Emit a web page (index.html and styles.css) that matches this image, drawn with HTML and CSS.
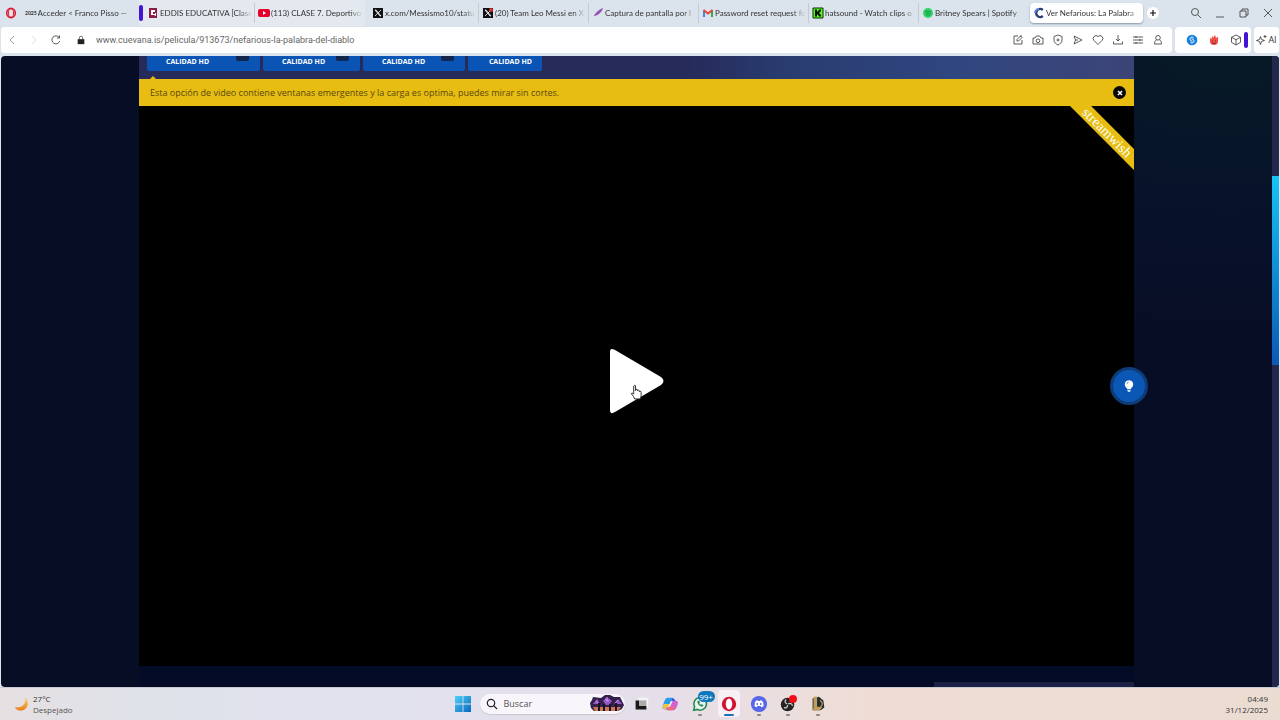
FILE: index.html
```
<!DOCTYPE html>
<html lang="es">
<head>
  <meta charset="UTF-8" />
  <title>Ver Nefarious: La Palabra del Diablo</title>
  <link rel="stylesheet" href="styles.css">
</head>
<body>
  <div class="tabbar">
    <button class="opera-menu" aria-label="Menú"><svg viewBox="0 0 12 12"><ellipse cx="6" cy="6" rx="4.3" ry="4.7" fill="none" stroke="#e0162f" stroke-width="1.6"/><ellipse cx="6" cy="6" rx="2.6" ry="4.2" fill="none" stroke="#e0162f" stroke-width="1"/></svg></button>
    <a class="tab tab-first" href="#"><span class="site-mark">2025</span><span class="tab-text">Acceder &lt; Franco Pisso —</span></a>
    <div class="tab-group">
      <span class="group-mark"></span>
      <a class="tab" href="#"><svg viewBox="0 0 12 12"><rect x="2" y="1" width="8" height="10" fill="#8c1d45"/><path d="M4 3h4v2H6v2h2V6h1v3L7 8H4z" fill="#fff"/></svg><span class="tab-text">EDDIS EDUCATIVA [Clase</span></a>
      <a class="tab" href="#"><svg viewBox="0 0 12 12"><rect x="0" y="2" width="12" height="8" rx="2" fill="#e4002b"/><path d="M5 4l3 2-3 2z" fill="#fff"/></svg><span class="tab-text">(113) CLASE 7. Deportivo</span></a>
    </div>
    <a class="tab" href="#"><svg viewBox="0 0 12 12"><path d="M1 1h10v10H1z" fill="#111"/><path d="M3 3l5 6h1L4 3zM9 3L3 9" fill="#777" stroke="#fff" stroke-width=".8"/></svg><span class="tab-text">x.com/Messismo10/statu</span></a>
    <a class="tab" href="#"><svg viewBox="0 0 12 12"><path d="M1 1h10v10H1z" fill="#111"/><path d="M3 3l5 6h1L4 3zM9 3L3 9" fill="#777" stroke="#fff" stroke-width=".8"/><circle cx="9" cy="3" r="2" fill="#d33434"/></svg><span class="tab-text">(20) Team Leo Messi en X</span></a>
    <a class="tab" href="#"><svg viewBox="0 0 12 12"><path d="M1 11C3 6 6 3 11 1 10 5 6 9 2 9z" fill="#9456b3"/></svg><span class="tab-text">Captura de pantalla por l</span></a>
    <a class="tab" href="#"><svg viewBox="0 0 12 12"><path d="M2 10V3" stroke="#4285f4" stroke-width="2"/><path d="M10 10V3" stroke="#34a853" stroke-width="2"/><path d="M1.500 3L6 6.500 10.500 3" fill="none" stroke="#ea4335" stroke-width="2"/></svg><span class="tab-text">Password reset request fo</span></a>
    <a class="tab" href="#"><svg viewBox="0 0 12 12"><path d="M1 1h10v10H1z" fill="#53fc18" stroke="#102908"/><path d="M3 2.500h2v2h1v-1h1v-1h2v2H8v1H7v1h1v1h1v2H7v-1H6v-1H5v2H3z" fill="#071004"/></svg><span class="tab-text">hatsound - Watch clips o</span></a>
    <a class="tab" href="#"><svg viewBox="0 0 12 12"><circle cx="6" cy="6" r="5" fill="#2fd566"/><path d="M3 4.500q3-1 6 .5M3.500 6.300q3-.8 5 .4M4 8q2-.5 4 .3" fill="none" stroke="#168343" stroke-width=".8"/></svg><span class="tab-text">Britney Spears | Spotify</span></a>
    <a class="tab active" href="#"><svg viewBox="0 0 12 12"><path d="M9.800 3A4 4 0 1 0 9.800 9" fill="none" stroke="#2b3f75" stroke-width="2.400"/><path d="M2 6a4 4 0 0 1 4-4" fill="none" stroke="#5a87e0" stroke-width="2"/></svg><span class="tab-text">Ver Nefarious: La Palabra</span></a>
    <button class="new-tab" aria-label="Nueva pestaña"><svg viewBox="0 0 12 12"><path d="M6 3v6M3 6h6" stroke="#111" stroke-width="1.200"/></svg></button>
    <div class="window-buttons">
      <button aria-label="Buscar pestañas"><svg viewBox="0 0 12 12"><circle cx="5" cy="5" r="3.500"/><path d="M7.600 7.600L11 11"/></svg></button>
      <button aria-label="Minimizar"><svg viewBox="0 0 12 12"><path d="M2 10h8"/></svg></button>
      <button aria-label="Restaurar"><svg viewBox="0 0 12 12"><path d="M2 4h6v6H2zM4 4V2h6v6H8"/></svg></button>
      <button aria-label="Cerrar"><svg viewBox="0 0 12 12"><path d="M2 2l8 8M10 2l-8 8"/></svg></button>
    </div>
  </div>

  <div class="toolbar">
    <div class="address">
      <button class="nav off" aria-label="Atrás"><svg viewBox="0 0 12 12"><path d="M8 2L4 6l4 4"/></svg></button>
      <button class="nav faint" aria-label="Adelante"><svg viewBox="0 0 12 12"><path d="M4 2l4 4-4 4"/></svg></button>
      <button class="nav" aria-label="Recargar"><svg viewBox="0 0 12 12"><path d="M9.700 7.200A4 4 0 1 1 9 3.300M9.500 1.500v2.500H7"/></svg></button>
      <svg class="lock" viewBox="0 0 12 12"><path d="M2 5h8v6H2z" fill="#222" stroke="none"/><path d="M4 5V3.500a2 2 0 0 1 4 0V5"/></svg>
      <div class="url"><label for="url">Dirección</label><input id="url" type="text" value="www.cuevana.is/pelicula/913673/nefarious-la-palabra-del-diablo"></div>
      <div class="page-tools">
        <button aria-label="Editar"><svg viewBox="0 0 12 12"><path d="M6 2H2v8h8V6M5 7V5.500L8.500 2 10 3.500 6.500 7zM8 2h2"/></svg></button>
        <button aria-label="Captura"><svg viewBox="0 0 12 12"><path d="M1 4h2l1.500-2h3L9 4h2v6H1z"/><circle cx="6" cy="6.800" r="1.800"/></svg></button>
        <button aria-label="Bloqueador"><svg viewBox="0 0 12 12"><path d="M6 1l4 1.500V6c0 2.500-2 4-4 5-2-1-4-2.500-4-5V2.500zM6 4.500v3M4.500 6h3"/></svg></button>
        <button aria-label="Enviar"><svg viewBox="0 0 12 12"><path d="M2 2l8 4-8 4 1.500-4zM3.500 6H6"/></svg></button>
        <button aria-label="Favorito"><svg viewBox="0 0 12 12"><path d="M6 10.500L2 6.500a2.700 2.700 0 0 1 4-4 2.700 2.700 0 0 1 4 4z"/></svg></button>
        <button aria-label="Descargas"><svg viewBox="0 0 12 12"><path d="M6 1v6M4 5l2 2 2-2M1.500 7.500V10h9V7.500"/></svg></button>
        <button aria-label="Ajustes"><svg viewBox="0 0 12 12"><path d="M1 3h10M1 6h10M1 9h10M4 2v2M8 5v2M4 8v2"/></svg></button>
        <button aria-label="Perfil"><svg viewBox="0 0 12 12"><circle cx="6" cy="3.800" r="2.300"/><path d="M4.500 6C3 6.500 2.500 8 2.500 10h7c0-2-.5-3.500-2-4"/></svg></button>
      </div>
    </div>
    <div class="extensions">
      <button aria-label="Shazam"><svg viewBox="0 0 12 12"><circle cx="6" cy="6" r="5.300" fill="#147ee0" stroke="none"/><path d="M7.500 3.500C5 1.800 2.500 5 5 6.800l1.500.5M4.500 8.500C7 10.200 9.500 7 7 5.200l-1.500-.5" stroke="#fff" stroke-width="1"/></svg></button>
      <button aria-label="Fuego"><svg viewBox="0 0 12 12"><path d="M2 4l1.500 1L4 2l1.500 1.500L7 .7 8 4l2-1.200V8c0 4-8 4-8 0z" fill="#ef5146" stroke="none"/><path d="M4 7h1M7 7h1M4 9q2 1 4 0" stroke="#721d27"/></svg></button>
      <button aria-label="Extensiones"><svg viewBox="0 0 12 12"><path d="M6 1l4.500 2.300v5L6 11 1.500 8.300v-5zM1.500 3.300L6 5.700l4.500-2.400M6 5.700V11"/></svg></button>
      <span class="group-mark"></span>
    </div>
    <button class="ai"><svg viewBox="0 0 12 12"><path d="M4.500 2.500l1 3 3 1-3 1-1 3-1-3-3-1 3-1zM9 1v3M7.500 2.500h3"/></svg>AI</button>
  </div>

  <div class="page">
    <main class="movie">
      <div class="servers">
        <button class="server">CALIDAD HD<span class="views"></span></button>
        <button class="server">CALIDAD HD<span class="views"></span></button>
        <button class="server">CALIDAD HD<span class="views"></span></button>
        <button class="server">CALIDAD HD</button>
      </div>
      <div class="notice">
        <span>Esta opción de video contiene ventanas emergentes y la carga es optima, puedes mirar sin cortes.</span>
        <button class="close" aria-label="Cerrar aviso"><svg viewBox="0 0 12 12"><path d="M4 4l4 4M8 4l-4 4" stroke="#fff" stroke-width="1.500"/></svg></button>
      </div>
      <div class="player">
        <button class="play" aria-label="Reproducir">
          <svg viewBox="0 0 54 66"><path d="M0 4Q0-1 5 2L51 29q5 4 0 8L5 64q-5 3-5-2z" fill="#fff"/></svg>
          <svg class="cursor" viewBox="0 0 14 17"><path d="M4 9V2q1-2 2 0v5-1q2-1 2 0v1q2-1 2 0v1q2-1 2 1v3q0 2-1 4H5Q4 13 1.500 10.500q0-2 2.500 0z" fill="#fff" stroke="#222"/></svg>
        </button>
        <div class="ribbon"><span>streamwish</span></div>
      </div>
      <div class="below"><div class="below-bar"></div></div>
    </main>
    <div class="scrollbar"><div class="thumb"></div></div>
    <button class="lights" aria-label="Apagar luces"><svg viewBox="0 0 12 16"><path d="M6 1a5 5 0 0 0-3 9l1 2h4l1-2a5 5 0 0 0-3-9zM4 13h4v1l-1 1H5l-1-1z" fill="#fff"/><path d="M3.500 5.500q.3-2 2-2.300" fill="none" stroke="#1459b5" stroke-width=".8"/></svg></button>
  </div>

  <div class="taskbar">
    <div class="weather">
      <svg viewBox="0 0 16 16"><defs><linearGradient id="moon" x2="0" y2="1"><stop stop-color="#fbd562"/><stop offset="1" stop-color="#ea7d18"/></linearGradient></defs><path d="M12 1c5 5 3 13-4 14-4 .5-6-1-7-4 5 2 12-1 11-10z" fill="url(#moon)"/></svg>
      <div><div>27°C</div><div class="sky">Despejado</div></div>
    </div>
    <div class="dock">
      <button class="start" aria-label="Inicio"><svg viewBox="0 0 16 16"><defs><linearGradient id="win" x2="1" y2="1"><stop stop-color="#4fd0f7"/><stop offset="1" stop-color="#0867bf"/></linearGradient></defs><path d="M0 0h7.600v7.600H0zM8.400 0H16v7.600H8.400zM0 8.400h7.600V16H0zM8.400 8.400H16V16H8.400z" fill="url(#win)"/></svg></button>
      <div class="search">
        <svg viewBox="0 0 12 12"><circle cx="5" cy="5" r="3.700" fill="none" stroke="#222" stroke-width="1.200"/><path d="M7.700 7.700L11 11" stroke="#222" stroke-width="1.200"/></svg>
        <label for="search">Buscar</label><input id="search" type="text" placeholder="Buscar">
        <svg class="fireworks" viewBox="0 0 34 17"><path d="M3 2l8 1 4-3h5l4 2 6 0 2 4 2 4-2 4-4 2H4l-3-3-1-5 2-3z" fill="#35204c"/><path d="M3 9l4-5 3 5zM13 6l4-4 5 4-3 4h-3zM24 9l4-5 4 5z" fill="#9357c8"/><path d="M3 12h28l-3 4H5z" fill="#c87952"/><path d="M9 8v8M14 9v7M20 9v7M26 8v8" stroke="#1b1327" stroke-width="2"/><path d="M15 4l4 2M17 2v5M6 6l2 2M28 5l-3 3" stroke="#d0a0ee" stroke-width=".8"/></svg>
      </div>
      <div class="apps">
        <button aria-label="Vista de tareas"><svg viewBox="0 0 20 20"><path d="M7 3h11v11H7z" fill="#f3f3f3"/><path d="M4 6h4v6h8v4H4z" fill="#191919"/><path d="M8 6h8v6H8z" fill="#aaa"/></svg></button>
        <button aria-label="Copilot"><svg viewBox="0 0 20 20"><path d="M7 3h6l2 4h-4l-3 9H5c-5 0-3-4-2-7 1-3 2-6 4-6z" fill="#2b9ce8"/><path d="M3 10l-1 3q0 3 4 3h3l2-6z" fill="#f4c63b"/><path d="M13 17H7l-2-3h4l3-8h3c5 0 4 3 3 6s-2 5-5 5z" fill="#d461d0"/><path d="M12 4h2l2 2-3 1z" fill="#324fc9"/><path d="M8 13h7l-2 4H8z" fill="#f26a72"/><path d="M11 7l-3 6h2l3-6z" fill="#f1eaf2"/></svg></button>
        <button class="running" aria-label="WhatsApp"><svg viewBox="0 0 20 20"><path d="M3 17l1-4a7 7 0 1 1 3 3z" fill="#e8f5ed" stroke="#238652" stroke-width="1.700"/><path d="M7 7q0 4 5 6l2-1-2-2-1 1-2-2 1-1-1-2z" fill="#238652"/></svg><span class="badge">99+</span></button>
        <button class="running current" aria-label="Opera"><svg viewBox="0 0 20 20"><circle cx="10" cy="10" r="8" fill="#d31332"/><ellipse cx="10" cy="10" rx="3.600" ry="6" fill="#fff"/></svg></button>
        <button class="running" aria-label="Discord"><svg viewBox="0 0 20 20"><circle cx="10" cy="10" r="9" fill="#5866e8"/><path d="M6.500 6.500l2-.7.500.8h2l.5-.8 2 .7q2 3 1.500 6l-2.500 1-.7-1.200H8.200l-.7 1.200-2.500-1q-.5-3 1.500-6z" fill="#fff"/><circle cx="8" cy="10" r="1" fill="#5866e8"/><circle cx="12" cy="10" r="1" fill="#5866e8"/></svg></button>
        <button class="running" aria-label="OBS"><svg viewBox="0 0 20 20"><circle cx="9.500" cy="10.500" r="7.500" fill="#242224"/><path d="M9 10Q5 8 8 5M10 10q4-2 5 2M9.500 11q0 4-4 3" fill="none" stroke="#ccc" stroke-width="1.400"/><circle cx="15.500" cy="4.500" r="4.500" fill="#f40d18"/></svg></button>
        <button class="running" aria-label="League of Legends"><svg viewBox="0 0 20 20"><path d="M4 4l7-2 5 4 1 8-4 3H4z" fill="#1b2c38"/><path d="M5 2h4v11h6l-3 4H4l1-3z" fill="#c39d58"/><path d="M12 6q5 3 1 7" fill="none" stroke="#b98b45" stroke-width="1.500"/></svg></button>
      </div>
    </div>
    <div class="clock"><div>04:49</div><div>31/12/2025</div></div>
  </div>
</body>
</html>
```
FILE: styles.css
```
* { box-sizing: border-box; }

body {
  margin: 0;
  height: 100vh;
  display: flex;
  flex-direction: column;
  overflow: hidden;
  background: #dbe4ed;
  color: #333;
  font: 8px/12px "Open Sans", "Noto Sans", sans-serif;
}

button, input {
  border: 0;
  padding: 0;
  background: none;
  color: inherit;
  font: inherit;
}

button {
  display: flex;
  align-items: center;
  justify-content: center;
  flex: none;
}

a {
  color: inherit;
  text-decoration: none;
}

svg {
  display: block;
  flex: none;
  width: 12px;
  height: 12px;
}

label {
  position: absolute;
  width: 1px;
  height: 1px;
  overflow: hidden;
  clip-path: inset(50%);
}

/* tabs */
.tabbar {
  display: flex;
  align-items: center;
  height: 27px;
  padding: 0 6px 1px 5px;
  font-family: Lato, "Open Sans", sans-serif;
}

.opera-menu {
  width: 12px;
  margin-right: 7px;
}

.tab {
  display: flex;
  align-items: center;
  gap: 1px;
  flex: 0 1 110px;
  min-width: 0;
  height: 20px;
  padding: 0 2px 0 3px;
  border-left: 1px solid transparent;
}

.tab + .tab {
  border-left-color: #c3ccd5;
}

.tab-first {
  flex-basis: 112px;
  padding: 0;
}

.site-mark {
  font-size: 5px;
  font-weight: bold;
}

.tab-text {
  flex: 1;
  overflow: hidden;
  white-space: nowrap;
  mask-image: linear-gradient(to right, #000 85%, transparent);
}

.tab-group {
  display: flex;
  align-items: center;
  flex: 0 1 226px;
  min-width: 0;
  height: 26px;
  margin: 0 3px;
  background: #e3e9ef;
}

.tab-group .tab {
  flex: 1;
}

.group-mark {
  flex: none;
  width: 4px;
  height: 16px;
  border-radius: 2px;
  background: #4314d3;
}

.tab.active {
  flex-basis: 113px;
  margin-left: 2px;
  border: 0;
  border-radius: 4px;
  background: #fff;
  box-shadow: 0 1px 2px #8c97a4;
}

.new-tab {
  width: 12px;
  height: 12px;
  margin-left: 4px;
  border-radius: 50%;
  background: #fff;
}

.window-buttons {
  display: flex;
  gap: 12px;
  margin-left: auto;
}

.window-buttons svg,
.toolbar svg {
  fill: none;
  stroke: #333;
  stroke-width: 0.8;
}

/* address row */
.toolbar {
  display: flex;
  gap: 3px;
  height: 29px;
  padding: 0 1px 3px;
}

.address,
.extensions,
.ai {
  display: flex;
  align-items: center;
  border-radius: 4px;
  background: #fff;
}

.address {
  flex: 1;
  padding: 0 8px 0 5px;
}

.nav {
  width: 12px;
  margin-right: 10px;
}

.off { opacity: 0.6; }
.faint { opacity: 0.2; }

.toolbar .lock {
  width: 10px;
  height: 10px;
  margin: 0 10px 0 4px;
}

.url {
  flex: 1;
  display: flex;
}

.url input {
  width: 100%;
  color: #666;
  font-family: Roboto, "Open Sans", sans-serif;
  font-size: 9px;
}

.page-tools {
  display: flex;
  gap: 8px;
}

.extensions {
  gap: 10px;
  width: 76px;
  padding-left: 11px;
}

.extensions .group-mark {
  margin-left: -8px;
}

.ai {
  width: 25px;
  font-size: 9px;
}

/* web page */
.page {
  position: relative;
  display: flex;
  flex: 1;
  min-height: 0;
  margin: 0 1px;
  overflow: hidden;
  border-radius: 4px;
  background: radial-gradient(ellipse at 96% 0, #071926 0, #07122a 18%, transparent 32%), #070d25;
}

.movie {
  display: flex;
  flex-direction: column;
  flex: 1;
  max-width: 995px;
  margin: 0 auto;
}

.servers {
  display: grid;
  grid-template-columns: 113px 97px 102px 74px;
  gap: 3px;
  height: 23px;
  padding: 0 8px 8px;
  background: linear-gradient(to right, #262b5a 55%, #293c70 65%, #304680 82%, #3c4476);
}

.server {
  position: relative;
  justify-content: flex-start;
  padding: 0 0 5px 19px;
  border-radius: 0 0 2px 2px;
  background: #0a54b5;
  color: #fff;
  font-size: 7px;
  font-weight: bold;
  line-height: 9px;
  white-space: nowrap;
}

.server:last-child {
  justify-content: flex-end;
  padding: 0 10px 5px 0;
}

.views {
  position: absolute;
  top: 0;
  right: 11px;
  width: 13px;
  height: 5px;
  border-radius: 0 0 2px 2px;
  background: #10264c;
}

.notice {
  position: relative;
  display: flex;
  align-items: center;
  justify-content: space-between;
  height: 27px;
  padding: 0 8px 0 11px;
  background: #e6bd10;
  color: #5b4811;
  font-size: 9px;
}

.notice::before {
  content: "";
  position: absolute;
  left: 11px;
  top: -3px;
  border: 3px solid transparent;
  border-top: 0;
  border-bottom-color: #e6bd10;
}

.close {
  width: 13px;
  height: 13px;
  border-radius: 50%;
  background: #080704;
}

.player {
  position: relative;
  display: flex;
  align-items: center;
  justify-content: center;
  flex: 1;
  padding-bottom: 10px;
  background: #000;
}

.play {
  position: relative;
}

.play svg {
  width: 54px;
  height: 66px;
}

.play .cursor {
  position: absolute;
  left: 20px;
  top: 36px;
  width: 13px;
  height: 16px;
}

.ribbon {
  position: absolute;
  top: 0;
  right: 0;
  width: 64px;
  height: 64px;
  overflow: hidden;
}

.ribbon span {
  position: absolute;
  left: -13px;
  top: 19px;
  width: 100px;
  background: #e6bd10;
  color: #fff;
  font: 14px/15px "Liberation Serif", serif;
  text-align: center;
  transform: rotate(45deg);
}

.below {
  display: flex;
  align-items: flex-end;
  justify-content: flex-end;
  height: 21px;
  background: #040b27;
}

.below-bar {
  width: 200px;
  height: 5px;
  background: #1e2146;
}

.scrollbar {
  width: 7px;
  padding-top: 120px;
  background: #24264a;
}

.thumb {
  height: 189px;
  background: linear-gradient(#16c4f5, #0a58b7);
}

.lights {
  position: absolute;
  right: 131px;
  top: 311px;
  width: 38px;
  height: 38px;
  border: 3px solid #0d3c78;
  border-radius: 50%;
  background: #0b57b5;
}

.lights svg {
  width: 10px;
  height: 14px;
}

/* taskbar */
.taskbar {
  display: grid;
  grid-template-columns: 1fr 373px 1fr;
  align-items: center;
  height: 33px;
  padding: 0 12px 1px 14px;
  border-top: 1px solid #c8c9d1;
  background: linear-gradient(to right, #e6e0e2, #dfe2e8 10%, #e1e2ef 25%, #e5dfeb 50%, #efddd5 68%, #ebdcd2);
  font-size: 8px;
  line-height: 11px;
}

.weather {
  display: flex;
  align-items: center;
  gap: 4px;
}

.weather svg {
  width: 15px;
  height: 16px;
}

.sky { color: #555; }

.dock {
  display: flex;
  align-items: center;
}

.start svg {
  width: 16px;
  height: 16px;
}

.search {
  display: flex;
  align-items: center;
  gap: 6px;
  width: 145px;
  height: 20px;
  margin: 0 6px 0 9px;
  padding: 0 1px 0 6px;
  border-radius: 10px;
  background: #f9f6fb;
  box-shadow: 0 1px 1px #ccc6cf;
}

.search input {
  flex: 1;
  min-width: 0;
  font-size: 9px;
}

.search input::placeholder { color: #555; }

.search .fireworks {
  width: 34px;
  height: 17px;
}

.apps {
  display: flex;
  justify-content: space-between;
  flex: 1;
}

.apps button {
  position: relative;
  width: 20px;
  height: 25px;
}

.apps svg {
  width: 18px;
  height: 18px;
}

.running::after {
  content: "";
  position: absolute;
  bottom: 0;
  width: 4px;
  height: 2px;
  border-radius: 1px;
  background: #888;
}

.apps .current {
  border-radius: 3px;
  background: #f7f1f6;
  box-shadow: 0 0 0 1px #f7f1f6;
}

.current::after {
  width: 10px;
  background: #1b72b9;
}

.badge {
  position: absolute;
  left: 8px;
  top: 0;
  width: 17px;
  border-radius: 6px;
  background: #0f78bc;
  color: #fff;
  text-align: center;
  line-height: 11px;
}

.clock {
  text-align: right;
}
```
